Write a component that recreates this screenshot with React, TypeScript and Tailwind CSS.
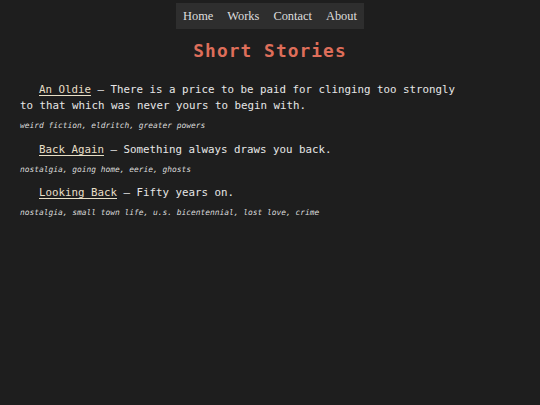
import React from 'react';

interface Story {
  title: string;
  blurb: string;
  tags: string;
}

const stories: Story[] = [
  {
    title: 'An Oldie',
    blurb: 'There is a price to be paid for clinging too strongly to that which was never yours to begin with.',
    tags: 'weird fiction, eldritch, greater powers',
  },
  {
    title: 'Back Again',
    blurb: 'Something always draws you back.',
    tags: 'nostalgia, going home, eerie, ghosts',
  },
  {
    title: 'Looking Back',
    blurb: 'Fifty years on.',
    tags: 'nostalgia, small town life, u.s. bicentennial, lost love, crime',
  },
];

const navLinks = ['Home', 'Works', 'Contact', 'About'];

const App: React.FC = () => {
  return (
    <div className="min-h-screen bg-[#1e1e1e] font-['DejaVu_Sans_Mono',monospace] text-[#e6e6e6]">
      {/* Nav */}
      <div className="flex justify-center pt-[3px]">
        <nav className="flex h-[26px] items-center bg-[#2e2e2e]">
          {navLinks.map((link) => (
            <a
              key={link}
              href="#"
              className="px-[7px] font-['Liberation_Serif',serif] text-[12.4px] leading-none text-[#dedede]"
            >
              {link}
            </a>
          ))}
        </nav>
      </div>

      {/* Title */}
      <h1 className="mt-[11px] text-center text-[17.8px] font-bold leading-[1.2] tracking-[1.1px] text-[#de6e5a]">
        Short Stories
      </h1>

      {/* Stories */}
      <div className="mt-[21px] pl-[20px] pr-[72px]">
        {stories.map((story) => (
          <div key={story.title} className="mb-[9.5px]">
            <p className="indent-[19px] text-[10.8px] leading-[16px]">
              <a href="#" className="text-[#e8dfc6] underline underline-offset-2">
                {story.title}
              </a>{' '}
              — {story.blurb}
            </p>
            <p className="mt-[6px] text-[7.9px] italic leading-[12px] text-[#dcdcdc]">{story.tags}</p>
          </div>
        ))}
      </div>
    </div>
  );
};

export default App;
